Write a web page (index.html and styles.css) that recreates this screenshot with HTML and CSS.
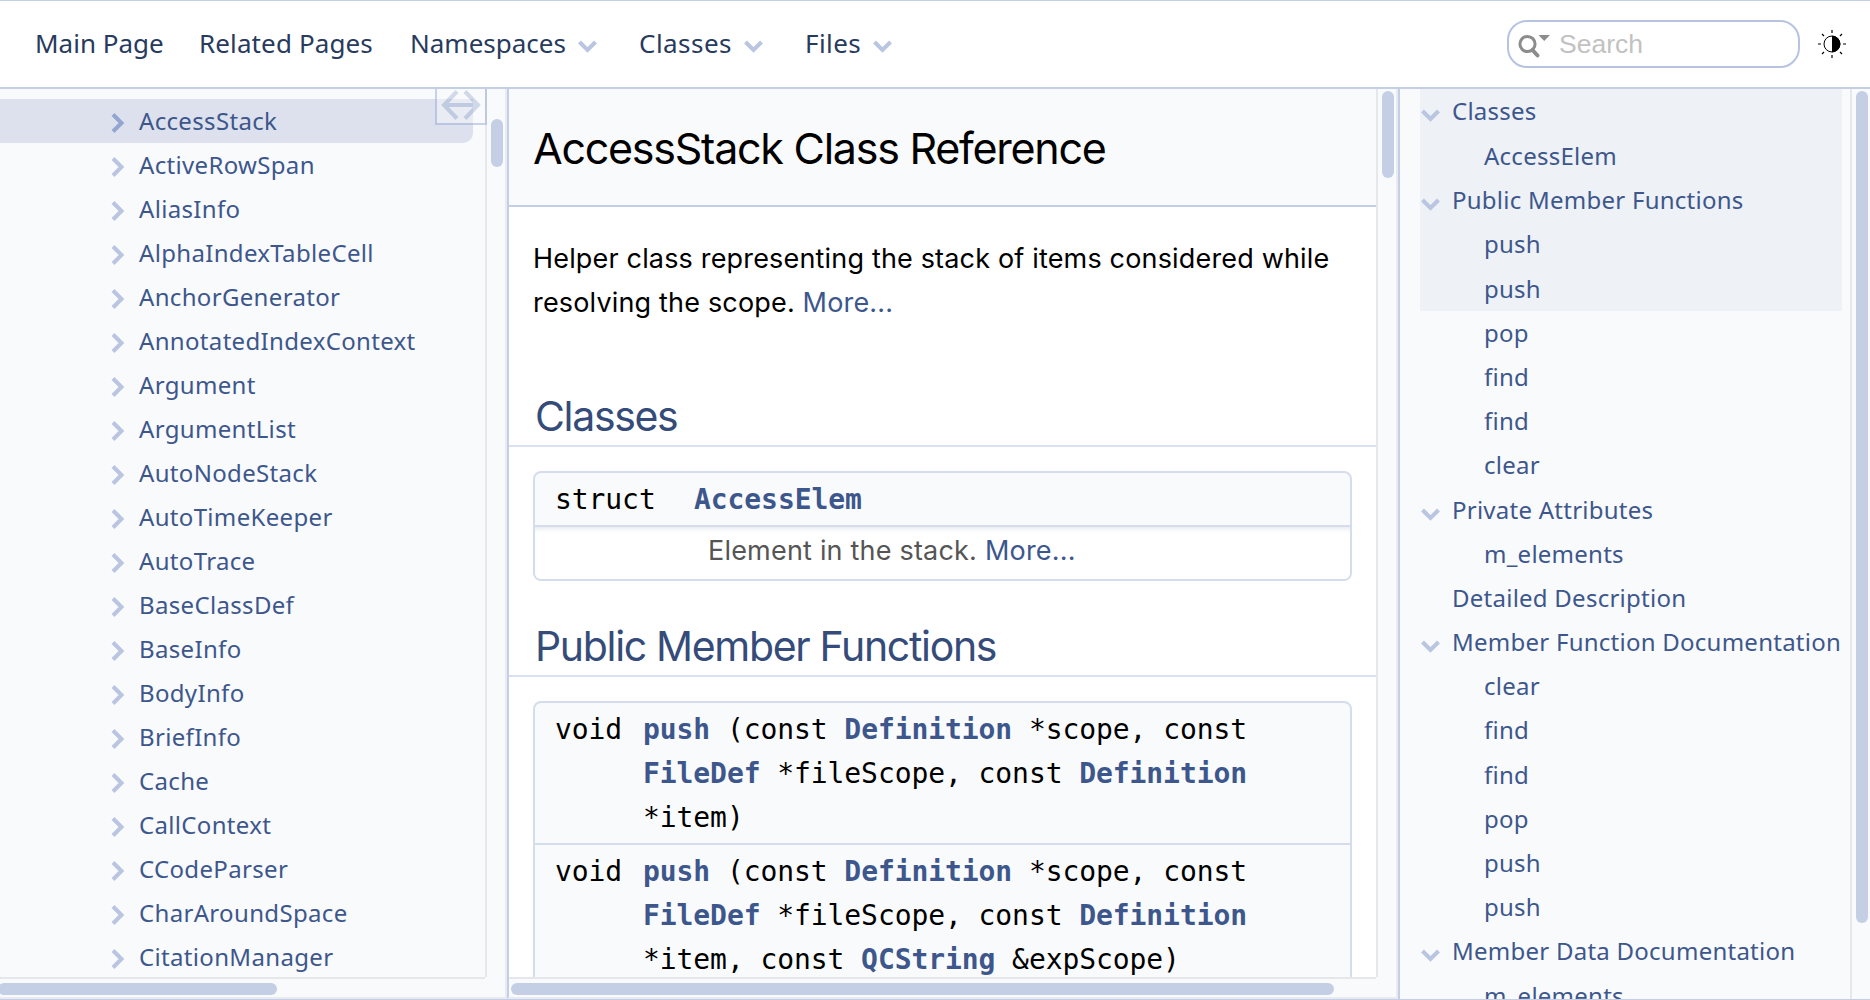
FILE: index.html
```html
<!DOCTYPE html>
<html lang="en">
<head>
<meta charset="utf-8">
<title>AccessStack Class Reference</title>
<link rel="stylesheet" href="styles.css">
</head>
<body>
<svg width="0" height="0" class="defs" aria-hidden="true">
  <symbol id="right" viewBox="0 0 14 20"><path d="M2 1.5 L10.5 10 L2 18.5" fill="none" stroke="currentColor" stroke-width="4"/></symbol>
  <symbol id="down" viewBox="0 0 19 14"><path d="M1.5 2 L9.5 10 L17.5 2" fill="none" stroke="currentColor" stroke-width="4"/></symbol>
</svg>
<header class="topbar">
  <nav class="menu">
    <a class="m1">Main Page</a>
    <a class="m2">Related Pages</a>
    <a class="m3">Namespaces<svg class="down"><use href="#down"/></svg></a>
    <a class="m4">Classes<svg class="down"><use href="#down"/></svg></a>
    <a class="m5">Files<svg class="down"><use href="#down"/></svg></a>
  </nav>
  <div class="search">
    <svg class="mag" width="34" height="26" viewBox="0 0 34 26"><circle cx="10.5" cy="11" r="7.6" fill="none" stroke="#8c8c8c" stroke-width="3"/><path d="M15.5 17 L20.5 22.5" stroke="#8c8c8c" stroke-width="4" stroke-linecap="round"/><path d="M21.5 2 H33 L27.2 8 Z" fill="#8c8c8c"/></svg>
    <span>Search</span>
  </div>
  <svg class="theme" width="28" height="28" viewBox="0 0 28 28"><circle cx="14" cy="14" r="8" fill="#fff" stroke="#000" stroke-width="1"/><path d="M14 5.7 A8.3 8.3 0 0 1 14 22.3 Z"/><path d="M14 0V3M14 25V28M0 14H3M25 14H28M4 4L6 6M22 22L24 24M24 4L22 6M4 24L6 22" stroke="#000" stroke-width="1.2"/></svg>
</header>
<main class="panes">
  <section class="pane side">
    <div class="view">
      <ul class="tree">
        <li class="sel"><svg><use href="#right"/></svg>AccessStack</li>
        <li><svg><use href="#right"/></svg>ActiveRowSpan</li>
        <li><svg><use href="#right"/></svg>AliasInfo</li>
        <li><svg><use href="#right"/></svg>AlphaIndexTableCell</li>
        <li><svg><use href="#right"/></svg>AnchorGenerator</li>
        <li><svg><use href="#right"/></svg>AnnotatedIndexContext</li>
        <li><svg><use href="#right"/></svg>Argument</li>
        <li><svg><use href="#right"/></svg>ArgumentList</li>
        <li><svg><use href="#right"/></svg>AutoNodeStack</li>
        <li><svg><use href="#right"/></svg>AutoTimeKeeper</li>
        <li><svg><use href="#right"/></svg>AutoTrace</li>
        <li><svg><use href="#right"/></svg>BaseClassDef</li>
        <li><svg><use href="#right"/></svg>BaseInfo</li>
        <li><svg><use href="#right"/></svg>BodyInfo</li>
        <li><svg><use href="#right"/></svg>BriefInfo</li>
        <li><svg><use href="#right"/></svg>Cache</li>
        <li><svg><use href="#right"/></svg>CallContext</li>
        <li><svg><use href="#right"/></svg>CCodeParser</li>
        <li><svg><use href="#right"/></svg>CharAroundSpace</li>
        <li><svg><use href="#right"/></svg>CitationManager</li>
      </ul>
      <div class="sync"><svg width="40" height="30" viewBox="0 0 40 30"><path d="M3 15H37M16 1.5L3 15L16 28.5M24 1.5L37 15L24 28.5" fill="none" stroke="#9fb1d6" stroke-width="4"/></svg></div>
    </div>
    <div class="vbar"><i></i></div>
    <div class="hbar"><i></i></div>
  </section>
  <section class="pane doc">
    <div class="view">
      <div class="title"><h1>AccessStack Class Reference</h1></div>
      <p class="brief"><span>Helper class representing the stack of items considered while</span><br>resolving the scope. <a>More...</a></p>
      <h2>Classes</h2>
      <div class="decl structs">
        <div class="row"><code class="kind">struct</code><code><b>AccessElem</b></code></div>
        <div class="desc">Element in the stack. <a>More...</a></div>
      </div>
      <h2 class="second">Public Member Functions</h2>
      <div class="decl funcs">
        <div class="row"><code class="kind">void</code><code><b>push</b> (const <b>Definition</b> *scope, const<br><b>FileDef</b> *fileScope, const <b>Definition</b><br>*item)</code></div>
        <div class="row"><code class="kind">void</code><code><b>push</b> (const <b>Definition</b> *scope, const<br><b>FileDef</b> *fileScope, const <b>Definition</b><br>*item, const <b>QCString</b> &amp;expScope)</code></div>
      </div>
    </div>
    <div class="vbar"><i></i></div>
    <div class="hbar"><i></i></div>
  </section>
  <aside class="pane toc">
    <div class="view">
      <ul class="outline">
        <li class="on"><svg class="down"><use href="#down"/></svg>Classes</li>
        <li class="on sub">AccessElem</li>
        <li class="on"><svg class="down"><use href="#down"/></svg>Public Member Functions</li>
        <li class="on sub">push</li>
        <li class="on sub">push</li>
        <li class="sub">pop</li>
        <li class="sub">find</li>
        <li class="sub">find</li>
        <li class="sub">clear</li>
        <li><svg class="down"><use href="#down"/></svg>Private Attributes</li>
        <li class="sub">m_elements</li>
        <li>Detailed Description</li>
        <li><svg class="down"><use href="#down"/></svg>Member Function Documentation</li>
        <li class="sub">clear</li>
        <li class="sub">find</li>
        <li class="sub">find</li>
        <li class="sub">pop</li>
        <li class="sub">push</li>
        <li class="sub">push</li>
        <li><svg class="down"><use href="#down"/></svg>Member Data Documentation</li>
        <li class="sub">m_elements</li>
      </ul>
    </div>
    <div class="vbar"><i></i></div>
  </aside>
</main>
</body>
</html>
```
FILE: styles.css
```css
* { box-sizing: border-box; margin: 0; padding: 0; }
body {
  width: 1870px; height: 1000px; overflow: hidden;
  display: flex; flex-direction: column;
  border-top: 1px solid #c4cfe5; border-bottom: 1px solid #c4cfe5;
  background: #fff; font-family: Inter, sans-serif; color: #000;
}
.defs { position: absolute; }
a { color: #3d578c; }

.topbar { flex: none; height: 88px; border-bottom: 2px solid #c4cfe5; display: flex; align-items: center; }
.menu { flex: 1; display: flex; align-items: center; padding: 0 0 2px 35px; font: 26px/36px "Noto Sans", sans-serif; }
.menu a { color: #283a5d; display: flex; align-items: center; white-space: nowrap; }
.m1 { width: 164px; }
.m2 { width: 211px; letter-spacing: .12px; }
.m3 { width: 229px; }
.m4 { width: 166px; letter-spacing: .45px; }
.m5 { letter-spacing: .45px; }
.down { width: 19px; height: 14px; color: #b9c5e1; flex: none; }
.menu .down { margin: 8px 0 0 12px; }
.search {
  width: 293px; height: 48px; border: 2px solid #b6c4e2; border-radius: 20px;
  display: flex; align-items: center; padding-left: 8px; gap: 8px;
  font: 26.5px/30px "Liberation Sans", sans-serif; color: #c2c2c2;
}
.mag { margin-top: 3px; }
.theme { margin: 0 24px 0 18px; }

.panes { flex: 1; min-height: 0; display: grid; grid-template-columns: 507px 891px 1fr; background: #f9fafc; }
.pane { display: grid; grid-template-columns: 1fr 20px; grid-template-rows: 888px 20px; min-width: 0; min-height: 0; overflow: hidden; }
.view { overflow: hidden; position: relative; }
.vbar { border-left: 2px solid #e5e7eb; grid-column: 2; grid-row: 1; }
.vbar i { display: block; width: 12px; border-radius: 6px; background: #c4cfe5; margin-left: 4px; }
.hbar { grid-column: 1; grid-row: 2; border-top: 2px solid #e5e7eb; padding-top: 4px; }
.hbar i { display: block; height: 12px; border-radius: 6px; background: #c4cfe5; }

.side { border-right: 2px solid #e8ebf1; border-bottom: 2px solid #e8ebf1; }
.side .view { overflow: visible; }
.side .vbar i { height: 48px; margin-top: 30px; }
.side .hbar i { width: 279px; margin-left: -2px; }
.tree { list-style: none; padding-top: 10px; font: 24px/44px "Noto Sans", sans-serif; color: #3d578c; }
.tree li { height: 44px; display: flex; align-items: center; padding-left: 111px; width: 473px; white-space: nowrap; letter-spacing: .33px; }
.tree svg { width: 14px; height: 20px; margin: 4px 14px 0 0; color: #b9c5e1; flex: none; }
.tree .sel { background: #dce1ed; border-radius: 0 0 10px 0; }
.tree .sel svg { color: #94a6d0; }
.sync {
  position: absolute; right: -2px; top: 0; width: 52px; height: 36px; opacity: .45;
  background: #f9fafc; border: 2px solid #8fa5d4; border-top: 0; padding: 1px 0 0 4px;
}

.doc { border-left: 2px solid #c4cfe5; border-right: 2px solid #e8ebf1; border-bottom: 2px solid #e8ebf1; }
.doc .view { background: #fff; }
.doc .vbar i { height: 87px; margin-top: 2px; }
.doc .hbar i { width: 823px; margin-left: 2px; }
.title { height: 118px; background: #f9fafc; border-bottom: 2px solid #c4cfe5; padding: 29px 0 0 24px; }
h1 { font-size: 43px; line-height: 60px; font-weight: 400; white-space: nowrap; letter-spacing: -1.25px; }
.brief { padding: 30px 0 0 24px; font-size: 27px; line-height: 44px; height: 174px; white-space: nowrap; letter-spacing: .17px; }
h2 { height: 66px; border-bottom: 2px solid #d9e0ef; padding: 4px 0 0 26px; font-size: 41px; line-height: 62px; font-weight: 430; color: #354c7b; white-space: nowrap; letter-spacing: -1.33px; }
h2.second { margin-top: 30px; }
.decl { margin: 24px 24px 0; border: 2px solid #d5ddec; border-radius: 8px; overflow: hidden; background: #f9fafc; }
.row { display: flex; padding: 5px 0 0 20px; }
code { font: 28px/44px "DejaVu Sans Mono", monospace; letter-spacing: -.08px; white-space: nowrap; }
code b { color: #3d578c; }
.structs .row { height: 52px; }
.structs .kind { width: 139px; }
.desc { height: 54px; border-top: 2px solid #d5ddec; background: #fff; box-shadow: inset 0 5px 5px -3px #e6e9ef; padding-left: 173px; font-size: 27px; line-height: 48px; color: #555; letter-spacing: .2px; }
.funcs .kind { width: 88px; }
.funcs .row { height: 140px; }
.funcs .row + .row { border-top: 2px solid #d5ddec; }

.toc { border-left: 2px solid #c4cfe5; }
.toc { grid-template-rows: 910px; }
.toc .vbar i { height: 832px; margin-top: 2px; }
.outline { list-style: none; margin-left: 20px; width: 422px; font: 24px/44px "Noto Sans", sans-serif; color: #3d578c; letter-spacing: .25px; }
.outline li { height: 44.2px; padding-left: 32px; white-space: nowrap; position: relative; }
.outline li:first-child { height: 45px; }
.outline .sub { padding-left: 64px; }
.outline .on { background: #eef1f6; }
.outline .down { position: absolute; left: 1px; top: 20px; }
```
